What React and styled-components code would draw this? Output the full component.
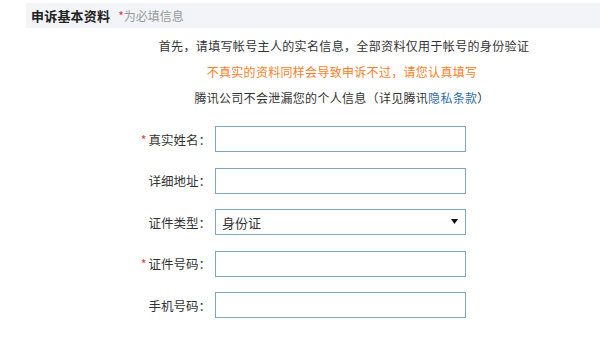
import React from "react";
import styled, { createGlobalStyle } from "styled-components";

const Global = createGlobalStyle`
  html, body { margin: 0; padding: 0; background: #fff; }
  body { font-family: "Noto Sans CJK SC", "Noto Sans", sans-serif; font-size: 12px; color: #333; }
`;

const Page = styled.div`
  width: 600px;
  height: 342px;
  overflow: hidden;
  padding-top: 3px;
  box-sizing: border-box;
`;

const HeaderBar = styled.div`
  margin-left: 26px;
  height: 25px;
  background: #f2f4f7;
  display: flex;
  align-items: center;
  padding-left: 5px;
  gap: 8px;
`;

const Title = styled.span`
  font-size: 13px;
  font-weight: bold;
  color: #222;
  letter-spacing: 0.2px;
`;

const Hint = styled.span`
  font-size: 12px;
  color: #999;
`;

const Star = styled.span`
  color: #e4393c;
  margin-right: ${(p) => p.$gap || 0}px;
`;

const Intro = styled.div`
  margin-top: 5px;
  padding-left: 84px;
  text-align: center;
`;

const IntroLine = styled.p`
  margin: 0;
  line-height: 26px;
  font-size: 12px;
  letter-spacing: ${(p) => p.$spacing ?? 0.3}px;
  padding-left: ${(p) => p.$shift || 0}px;
  color: ${(p) => (p.$warn ? "#ff7d24" : "#333")};
`;

const Link = styled.a`
  color: #2f6ea5;
  text-decoration: none;
`;

const Form = styled.div`
  margin-top: 15px;
  display: flex;
  flex-direction: column;
  gap: 15.5px;
`;

const Row = styled.div`
  display: flex;
  align-items: center;
  height: 26px;
`;

const Label = styled.label`
  width: 215px;
  text-align: right;
  padding-right: 4px;
  box-sizing: border-box;
  font-size: 12.5px;
  color: #333;
`;

const Input = styled.input`
  width: 251px;
  height: 26px;
  margin: 0;
  box-sizing: border-box;
  border: 1px solid #7ea7c3;
  padding: 0 6px;
  outline: none;
  font-family: inherit;
  font-size: 13px;
  background: #fff;
`;

const SelectWrap = styled.div`
  position: relative;
  width: 251px;
  height: 26px;
`;

const Select = styled.select`
  appearance: none;
  -webkit-appearance: none;
  width: 100%;
  height: 100%;
  margin: 0;
  box-sizing: border-box;
  border: 1px solid #7ea7c3;
  padding: 0 6px;
  background: #fff;
  font-family: inherit;
  font-size: 13px;
  color: #333;
  outline: none;
  border-radius: 0;
`;

const Caret = styled.svg`
  position: absolute;
  right: 8px;
  top: 10px;
  pointer-events: none;
`;

export default function App() {
  return (
    <>
      <Global />
      <Page>
        <HeaderBar>
          <Title>申诉基本资料</Title>
          <Hint>
            <Star>*</Star>为必填信息
          </Hint>
        </HeaderBar>
        <Intro>
          <IntroLine $spacing={0.35} $shift={4}>首先，请填写帐号主人的实名信息，全部资料仅用于帐号的身份验证</IntroLine>
          <IntroLine $warn>不真实的资料同样会导致申诉不过，请您认真填写</IntroLine>
          <IntroLine>
            腾讯公司不会泄漏您的个人信息（详见腾讯<Link href="#">隐私条款</Link>）
          </IntroLine>
        </Intro>
        <Form>
          <Row>
            <Label>
              <Star $gap={2}>*</Star>真实姓名：
            </Label>
            <Input />
          </Row>
          <Row>
            <Label>详细地址：</Label>
            <Input />
          </Row>
          <Row>
            <Label>证件类型：</Label>
            <SelectWrap>
              <Select defaultValue="id">
                <option value="id">身份证</option>
              </Select>
              <Caret width="7" height="5" viewBox="0 0 7 5">
                <path d="M0 0 H7 L3.5 5 Z" fill="#111" />
              </Caret>
            </SelectWrap>
          </Row>
          <Row>
            <Label>
              <Star $gap={2}>*</Star>证件号码：
            </Label>
            <Input />
          </Row>
          <Row>
            <Label>手机号码：</Label>
            <Input />
          </Row>
        </Form>
      </Page>
    </>
  );
}
